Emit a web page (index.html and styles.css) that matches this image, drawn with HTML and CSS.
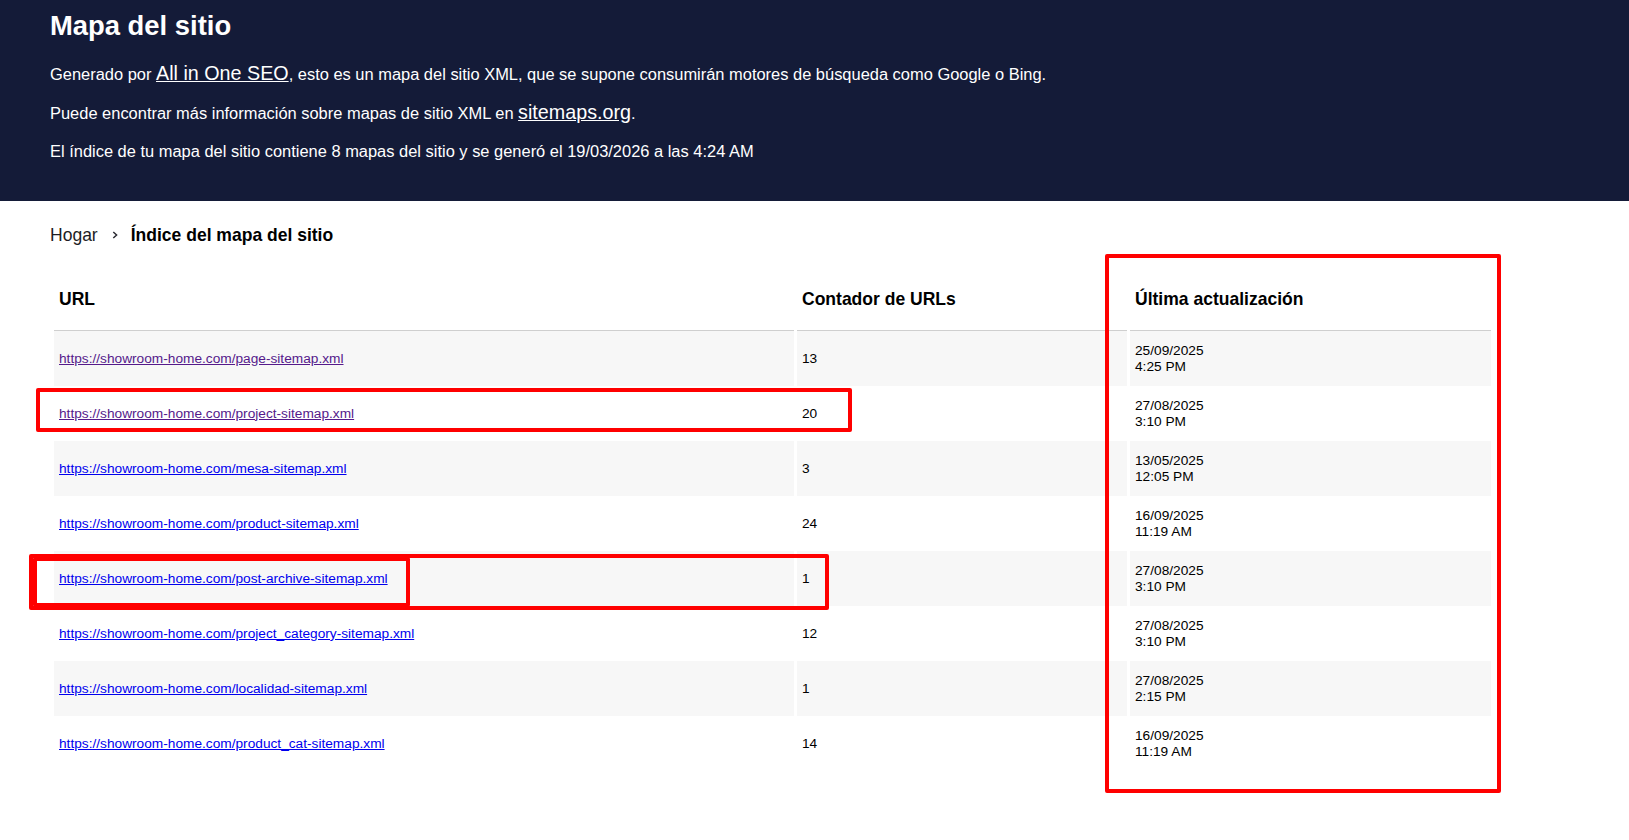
FILE: index.html
```html
<!DOCTYPE html>
<html lang="es">
<head>
    <meta charset="UTF-8">
    <meta name="viewport" content="width=device-width, initial-scale=1.0">
    <title>Mapa del sitio XML</title>
    <link rel="stylesheet" href="styles.css">
</head>
<body>
    <div class="content-head">
        <h1>Mapa del sitio</h1>
        <p>Generado por <a href="#">All in One SEO</a>, esto es un mapa del sitio XML, que se supone consumirán motores de búsqueda como Google o Bing.</p>
        <p>Puede encontrar más información sobre mapas de sitio XML en <a href="#">sitemaps.org</a>.</p>
        <p>El índice de tu mapa del sitio contiene 8 mapas del sitio y se generó el 19/03/2026 a las 4:24 AM</p>
    </div>

    <div class="breadcrumb">
        <span class="crumb">Hogar</span>
        <svg class="chevron" width="8" height="8" viewBox="0 0 8 8">
            <polyline points="2.3,1 5.6,4 2.3,7" fill="none" stroke="#2b2b33" stroke-width="1.5"/>
        </svg>
        <span class="crumb current">Índice del mapa del sitio</span>
    </div>

    <div class="content">
        <table class="sitemap">
            <thead>
                <tr>
                    <th class="col-url">URL</th>
                    <th class="col-count">Contador de URLs</th>
                    <th class="col-date">Última actualización</th>
                </tr>
            </thead>
            <tbody>
                <tr class="stripe">
                    <td><a class="visited" href="#">https://showroom-home.com/page-sitemap.xml</a></td>
                    <td>13</td>
                    <td>25/09/2025<br>4:25 PM</td>
                </tr>
                <tr>
                    <td><a class="visited" href="#">https://showroom-home.com/project-sitemap.xml</a></td>
                    <td>20</td>
                    <td>27/08/2025<br>3:10 PM</td>
                </tr>
                <tr class="stripe">
                    <td><a href="#">https://showroom-home.com/mesa-sitemap.xml</a></td>
                    <td>3</td>
                    <td>13/05/2025<br>12:05 PM</td>
                </tr>
                <tr>
                    <td><a href="#">https://showroom-home.com/product-sitemap.xml</a></td>
                    <td>24</td>
                    <td>16/09/2025<br>11:19 AM</td>
                </tr>
                <tr class="stripe">
                    <td><a href="#">https://showroom-home.com/post-archive-sitemap.xml</a></td>
                    <td>1</td>
                    <td>27/08/2025<br>3:10 PM</td>
                </tr>
                <tr>
                    <td><a href="#">https://showroom-home.com/project_category-sitemap.xml</a></td>
                    <td>12</td>
                    <td>27/08/2025<br>3:10 PM</td>
                </tr>
                <tr class="stripe">
                    <td><a href="#">https://showroom-home.com/localidad-sitemap.xml</a></td>
                    <td>1</td>
                    <td>27/08/2025<br>2:15 PM</td>
                </tr>
                <tr>
                    <td><a href="#">https://showroom-home.com/product_cat-sitemap.xml</a></td>
                    <td>14</td>
                    <td>16/09/2025<br>11:19 AM</td>
                </tr>
            </tbody>
        </table>
    </div>

    <!-- review marks drawn over the screenshot -->
    <div class="mark mark-project"></div>
    <div class="mark mark-archive-row"></div>
    <div class="mark mark-archive-url"></div>
    <div class="mark mark-dates"></div>
</body>
</html>
```

FILE: styles.css
```css
body {
    margin: 0;
    font-family: "Liberation Sans", Arial, Helvetica, sans-serif;
    font-size: 68.5%;
    color: #000;
    background: #fff;
    position: relative;
    min-height: 840px;
}

.content-head {
    background-color: #141b38;
    color: #fff;
    padding: 10px 50px 39px;
}

.content-head h1 {
    margin: 0;
    font-size: 2.5em;
    line-height: 32px;
    font-weight: bold;
}

.content-head p {
    margin: 16px 0 0;
    font-size: 1.5em;
    line-height: 22px;
}

.content-head h1 + p {
    margin-top: 20px;
}

.content-head a {
    color: #fff;
    font-size: 1.2em;
}

.breadcrumb {
    display: flex;
    align-items: center;
    margin: 24px 50px 0;
    font-size: 1.6em;
    color: #1d1d24;
}

.chevron {
    margin: 0 12px 0 13px;
    position: relative;
    top: -1px;
}

.crumb.current {
    font-weight: bold;
    color: #000;
}

.content {
    padding: 23px 0 0 51px;
}

.sitemap {
    border-collapse: separate;
    border-spacing: 3px 0;
    font-size: 1.25em;
    width: 1443px;
    table-layout: fixed;
}

.sitemap th {
    text-align: left;
    font-size: 1.28em;
    font-weight: bold;
    padding: 20px 5px;
    border-bottom: 1px solid #cfcfcf;
}

.col-url { width: 730px; }
.col-count { width: 320px; }
.col-date { width: 351px; }

.sitemap td {
    height: 55px;
    padding: 0 5px;
    box-sizing: border-box;
    vertical-align: middle;
    line-height: 15.75px;
}

.sitemap tr.stripe td {
    background-color: #f7f7f7;
}

.sitemap a {
    color: #0000ee;
}

.sitemap a.visited {
    color: #551a8b;
}

.mark {
    position: absolute;
    border: 4px solid #ff0000;
    border-radius: 2px;
    box-sizing: border-box;
    pointer-events: none;
}

.mark-project {
    left: 36px;
    top: 388px;
    width: 816px;
    height: 44px;
}

.mark-archive-row {
    left: 29px;
    top: 554px;
    width: 800px;
    height: 56px;
}

.mark-archive-url {
    left: 33px;
    top: 557px;
    width: 377px;
    height: 50px;
}

.mark-dates {
    left: 1105px;
    top: 254px;
    width: 396px;
    height: 539px;
}
```
